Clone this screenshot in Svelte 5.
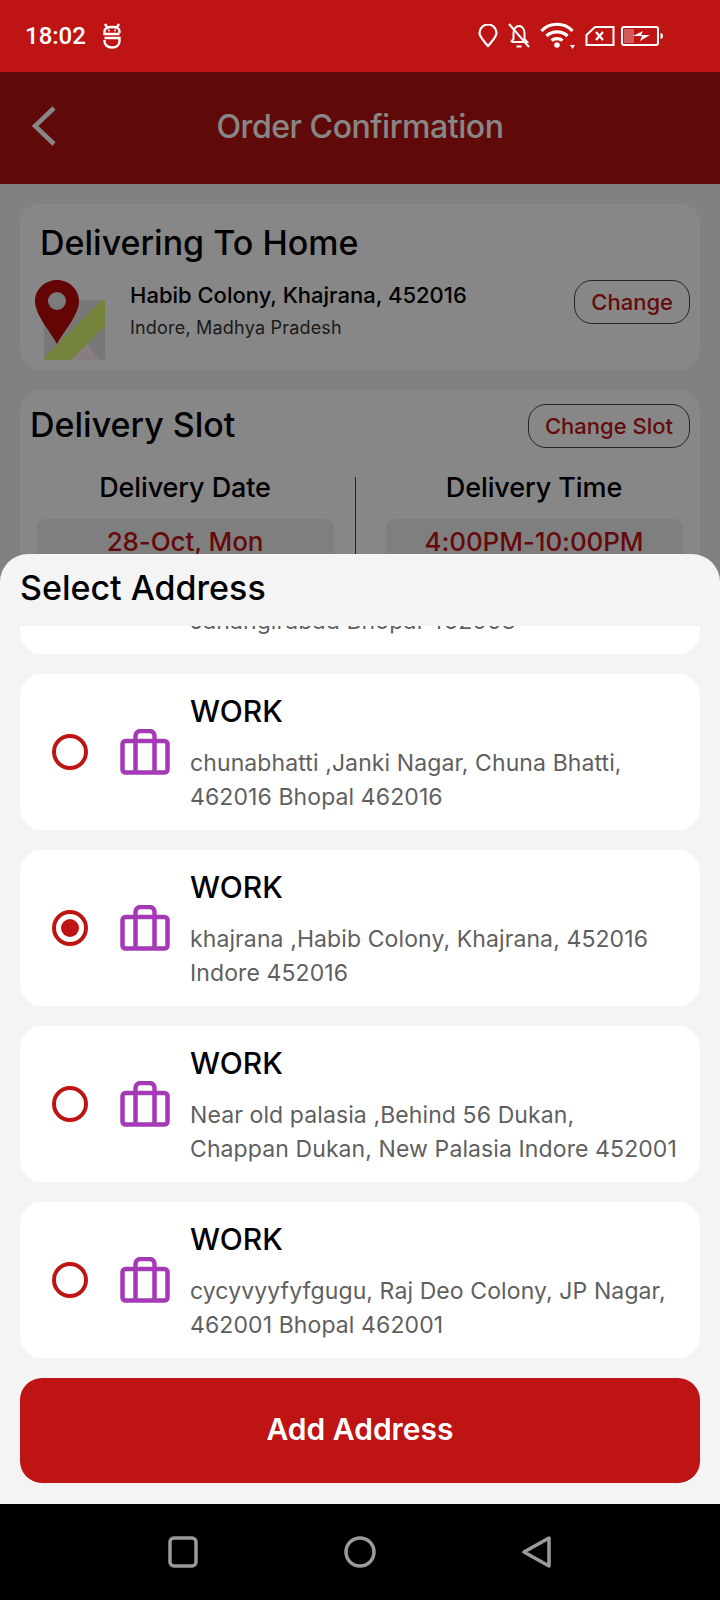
<script>
	const addresses = [
		{ line1: 'Kohefiza ,Ahmedabad Palace Road,', line2: 'Jahangirabad Bhopal 462003', picked: false },
		{ line1: 'chunabhatti ,Janki Nagar, Chuna Bhatti,', line2: '462016 Bhopal 462016', picked: false },
		{ line1: 'khajrana ,Habib Colony, Khajrana, 452016', line2: 'Indore 452016', picked: true },
		{ line1: 'Near old palasia ,Behind 56 Dukan,', line2: 'Chappan Dukan, New Palasia Indore 452001', picked: false },
		{ line1: 'cycyvyyfyfgugu, Raj Deo Colony, JP Nagar,', line2: '462001 Bhopal 462001', picked: false }
	];
</script>

<div class="phone">
	<div class="status">
		<div class="status-left">
			<span class="time">18:02</span>
			<svg width="20" height="26" viewBox="0 0 20 26" fill="none" stroke="#fff" stroke-width="2.4">
				<path d="M3 1l2 3M17 1l-2 3" />
				<path d="M17.500 10V8c0-2.500-3-4-7.500-4S2.500 5.500 2.500 8v3h15M2.500 15h15v3c0 4-3 6.500-7.500 6.500S2.500 22 2.500 18v-1" />
				<circle cx="7" cy="7.500" r="1" fill="#fff" stroke="none" />
				<circle cx="13" cy="7.500" r="1" fill="#fff" stroke="none" />
			</svg>
		</div>
		<div class="status-right">
			<svg width="20" height="24" viewBox="0 0 20 24" fill="none" stroke="#fff" stroke-width="2.200">
				<path d="M10 22C6 17 1.500 13 1.500 9a8.500 8.500 0 0 1 17 0c0 4-4.500 8-8.500 13z" />
			</svg>
			<svg width="24" height="26" viewBox="0 0 24 26" fill="none" stroke="#fff" stroke-width="2">
				<path d="M5 19h15l-2.500-3v-6c0-4-2.500-7-5.500-7s-5.500 3-5.500 7v6L4 19" />
				<path d="M2 1l20 23M9.500 23.500h5" />
			</svg>
			<svg width="36" height="28" viewBox="0 0 36 28" fill="none" stroke="#fff" stroke-width="3.200">
				<path d="M1.500 9c8-9 23-9 31 0M6.500 14c5.500-5.500 15.500-5.500 21 0M11.500 18.500c3-2.500 8-2.500 11 0" />
				<circle cx="17" cy="23" r="2.800" fill="#fff" stroke="none" />
				<path d="M30 23h5l-2.500 4z" fill="#fff" stroke="none" />
			</svg>
			<svg width="30" height="22" viewBox="0 0 30 22" fill="none" stroke="#fff" stroke-width="2">
				<path d="M10 2h18.500v18H1.500v-10z" />
				<path d="M11 7l7 8M18 7l-7 8" stroke-width="2.200" />
			</svg>
			<svg class="battery" width="44" height="20" viewBox="0 0 44 20" fill="none">
				<rect x="1" y="1" width="36" height="18" rx="2" stroke="#fff" stroke-width="2" />
				<rect x="3" y="3" width="10" height="14" fill="#fff" fill-opacity=".3" />
				<path d="M39.500 7c2 .5 2.500 1.500 2.500 3s-.5 2.500-2.500 3z" fill="#fff" />
				<path d="M12 10l10-5-2 4h9l-10 6 2-5z" fill="#fff" />
			</svg>
		</div>
	</div>

	<div class="screen">
		<div class="page">
			<div class="topbar">
				<svg class="back" width="26" height="40" viewBox="0 0 26 40" fill="none" stroke="#fff" stroke-width="4.500">
					<path d="M23 2L4 20l19 18" />
				</svg>
				<span class="topbar-title">Order Confirmation</span>
			</div>

			<div class="content">
				<section class="card home">
					<h2>Delivering To Home</h2>
					<div class="home-row">
						<svg class="map" width="72" height="82" viewBox="0 0 72 82">
							<rect x="9" y="20" width="61" height="60" rx="1" fill="#e2e2e2" />
							<path d="M32 80l18-20 14 20z" fill="#fff0f0" />
							<path d="M9 80v-2L67 20h3v26L36 80z" fill="#dbf96e" />
							<path d="M22 0C10 0 0 9.500 0 21c0 14 15 30 22 43 7-13 22-29 22-43C44 9.500 34 0 22 0z" fill="#bd0b0b" />
							<circle cx="22" cy="21" r="9" fill="#e8e8e8" />
						</svg>
						<div class="home-text">
							<div class="home-line">Habib Colony, Khajrana, 452016</div>
							<div class="home-city">Indore, Madhya Pradesh</div>
						</div>
						<button class="outline">Change</button>
					</div>
				</section>

				<section class="card slot">
					<div class="slot-head">
						<h2>Delivery Slot</h2>
						<button class="outline">Change Slot</button>
					</div>
					<div class="slot-cols">
						<div class="slot-col">
							<h3>Delivery Date</h3>
							<div class="slot-val">28-Oct, Mon</div>
						</div>
						<div class="slot-rule"></div>
						<div class="slot-col">
							<h3>Delivery Time</h3>
							<div class="slot-val">4:00PM-10:00PM</div>
						</div>
					</div>
				</section>
			</div>
		</div>

		<div class="dim"></div>

		<div class="sheet">
			<h2 class="sheet-title">Select Address</h2>
			<div class="list">
				{#each addresses as a}
					<div class="addr">
						<span class="radio" class:on={a.picked}></span>
						<svg class="bag" width="50" height="46" viewBox="0 0 50 46" fill="none" stroke="#a43ab6" stroke-width="4.500">
							<rect x="2.500" y="12" width="45" height="31.500" rx="3" />
							<path d="M15.500 43V7a5 5 0 0 1 5-5h9a5 5 0 0 1 5 5v36" />
						</svg>
						<div class="addr-text">
							<div class="addr-type">WORK</div>
							<div class="addr-line">{a.line1}</div>
							<div class="addr-line">{a.line2}</div>
						</div>
					</div>
				{/each}
			</div>
			<button class="add">Add Address</button>
		</div>
	</div>

	<div class="nav">
		<svg width="30" height="32" viewBox="0 0 30 32" fill="none" stroke="#9a9a9a" stroke-width="3.500">
			<rect x="2" y="2" width="26" height="28" rx="4" />
		</svg>
		<svg width="32" height="32" viewBox="0 0 32 32" fill="none" stroke="#9a9a9a" stroke-width="3.500">
			<circle cx="16" cy="16" r="14" />
		</svg>
		<svg width="30" height="32" viewBox="0 0 30 32" fill="none" stroke="#9a9a9a" stroke-width="3.500" stroke-linejoin="round">
			<path d="M27 2v28L2 16z" />
		</svg>
	</div>
</div>

<style>
	:global(body) {
		margin: 0;
		background: #000;
	}
	.phone {
		width: 720px;
		height: 1600px;
		display: flex;
		flex-direction: column;
		font-family: Inter, 'Liberation Sans', sans-serif;
		overflow: hidden;
	}
	h2,
	h3 {
		margin: 0;
		font-weight: 500;
		color: #000;
	}
	.status {
		height: 72px;
		background: #bf1414;
		display: flex;
		align-items: center;
		justify-content: space-between;
		padding: 0 55px 0 25px;
		color: #fff;
		flex: none;
	}
	.status-left {
		display: flex;
		align-items: center;
		gap: 16px;
	}
	.time {
		font-family: Roboto, sans-serif;
		font-size: 24px;
		font-weight: 500;
	}
	.status-right {
		display: flex;
		align-items: center;
		gap: 9px;
	}
	.battery {
		margin-left: -3px;
	}
	.screen {
		position: relative;
		flex: 1;
		overflow: hidden;
	}
	.page {
		height: 100%;
		background: #f4f4f4;
	}
	.topbar {
		height: 112px;
		background: #b51212;
		position: relative;
		display: flex;
		align-items: center;
		justify-content: center;
	}
	.back {
		position: absolute;
		left: 31px;
		top: 34px;
	}
	.topbar-title {
		color: #fff;
		font-size: 32px;
		font-weight: 500;
		margin-top: -4px;
		letter-spacing: -0.45px;
	}
	.content {
		padding: 20px;
		display: flex;
		flex-direction: column;
		gap: 20px;
	}
	.card {
		background: #fff;
		border-radius: 20px;
	}
	.home {
		height: 166px;
		box-sizing: border-box;
		padding: 18px 10px 0 15px;
	}
	.home h2 {
		font-size: 34px;
		padding-left: 5px;
	}
	.home-row {
		display: flex;
		align-items: flex-start;
		margin-top: 17px;
	}
	.home-text {
		margin-left: 23px;
		margin-top: 2px;
		flex: 1;
	}
	.home-line {
		font-size: 22px;
		font-weight: 500;
		color: #000;
	}
	.home-city {
		font-size: 18px;
		letter-spacing: 0.2px;
		color: #333;
		margin-top: 9px;
	}
	.outline {
		border: 1.500px solid #444;
		border-radius: 18px;
		background: transparent;
		color: #bf1414;
		font: 500 22px Inter, sans-serif;
		height: 44px;
		padding: 0 16px;
	}
	.slot {
		height: 400px;
		box-sizing: border-box;
		padding: 14px 10px 0 10px;
	}
	.slot-head {
		display: flex;
		justify-content: space-between;
		align-items: center;
	}
	.slot-head h2 {
		font-size: 34px;
		margin-top: -4px;
	}
	.slot-cols {
		display: flex;
		margin: 23px 0 0 6.500px;
	}
	.slot-col {
		width: 297px;
		text-align: center;
		flex: none;
	}
	.slot-rule {
		width: 1.500px;
		flex: none;
		background: #444;
		margin: 6px 29.500px 0 21px;
	}
	.slot-col h3 {
		font-size: 27px;
		letter-spacing: -0.1px;
	}
	.slot-val {
		margin-top: 15px;
		background: #f0f0f0;
		border-radius: 8px;
		color: #bf1414;
		font-size: 26px;
		font-weight: 500;
		height: 60px;
		line-height: 46px;
		letter-spacing: -0.1px;
	}
	.dim {
		position: absolute;
		inset: 0;
		background: rgba(0, 0, 0, 0.47);
	}
	.sheet {
		position: absolute;
		left: 0;
		right: 0;
		bottom: 0;
		height: 950px;
		background: #f4f4f4;
		border-radius: 28px 28px 0 0;
		display: flex;
		flex-direction: column;
	}
	.sheet-title {
		font-size: 34px;
		padding: 13px 20px 0;
		height: 59px;
	}
	.list {
		height: 732px;
		overflow: hidden;
		margin: 0 20px;
		display: flex;
		flex-direction: column;
		gap: 20px;
		flex: none;
	}
	.addr {
		flex: none;
		height: 156px;
		box-sizing: border-box;
		background: #fff;
		border-radius: 22px;
		display: flex;
		align-items: center;
		padding-left: 32px;
	}
	.addr:first-child {
		margin-top: -128px;
	}
	.radio {
		width: 36px;
		height: 36px;
		box-sizing: border-box;
		border: 4px solid #bf1414;
		border-radius: 50%;
		flex: none;
		padding: 5px;
		background-clip: content-box;
	}
	.radio.on {
		background-color: #bf1414;
	}
	.bag {
		margin-left: 32px;
		flex: none;
	}
	.addr-text {
		margin-left: 20px;
	}
	.addr-type {
		font-size: 30px;
		font-weight: 500;
		color: #000;
		line-height: 40px;
		margin-bottom: 15px;
	}
	.addr-line {
		font-size: 23px;
		color: #5f5f5f;
		line-height: 34px;
		letter-spacing: 0.1px;
		white-space: nowrap;
	}
	.add {
		margin: 20px 20px 0;
		height: 105px;
		background: #bf1414;
		border: 0;
		border-radius: 22px;
		color: #fff;
		font: 600 30px Inter, sans-serif;
		padding-bottom: 4px;
		flex: none;
	}
	.nav {
		height: 96px;
		background: #000;
		flex: none;
		display: flex;
		justify-content: center;
		align-items: center;
		gap: 146px;
	}
</style>
